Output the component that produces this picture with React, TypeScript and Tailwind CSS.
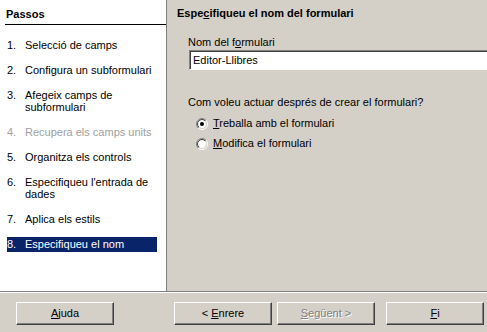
import React from "react";

const steps = [
  { n: "1.", label: "Selecció de camps" },
  { n: "2.", label: "Configura un subformulari" },
  { n: "3.", label: "Afegeix camps de subformulari" },
  { n: "4.", label: "Recupera els camps units", disabled: true },
  { n: "5.", label: "Organitza els controls" },
  { n: "6.", label: "Especifiqueu l'entrada de dades" },
  { n: "7.", label: "Aplica els estils" },
  { n: "8.", label: "Especifiqueu el nom", active: true },
];

const Radio = ({ checked }: { checked?: boolean }) => (
  <svg width="12" height="12" viewBox="0 0 12 12" className="shrink-0">
    <defs>
      <linearGradient id="outer" x1="0" y1="0" x2="1" y2="1">
        <stop offset="50%" stopColor="#808080" />
        <stop offset="50%" stopColor="#ffffff" />
      </linearGradient>
      <linearGradient id="inner" x1="0" y1="0" x2="1" y2="1">
        <stop offset="50%" stopColor="#404040" />
        <stop offset="50%" stopColor="#d4d0c8" />
      </linearGradient>
    </defs>
    <circle cx="6" cy="6" r="5.5" fill="none" stroke="url(#outer)" strokeWidth="1" />
    <circle cx="6" cy="6" r="4.5" fill="#ffffff" stroke="url(#inner)" strokeWidth="1" />
    {checked && <circle cx="6" cy="6" r="2" fill="#000000" />}
  </svg>
);

// Win2000 style raised push button
const Button = ({ children, disabled, className = "" }: { children: React.ReactNode; disabled?: boolean; className?: string }) => (
  <div
    className={`w-[98px] h-[23px] flex items-center justify-center border-t border-l border-t-white border-l-white border-b border-r border-b-[#404040] border-r-[#404040] shadow-[inset_-1px_-1px_0_#808080] ${
      disabled ? "text-[#808080] [text-shadow:1px_1px_0_#ffffff]" : "text-black"
    } ${className}`}
  >
    <span className="whitespace-pre">{children}</span>
  </div>
);

export default function App() {
  return (
    <div className="w-[487px] h-[332px] bg-[#d4d0c8] flex flex-col overflow-hidden text-[11px] leading-[13px] text-black font-['Liberation_Sans',Arial,sans-serif]">
      <div className="flex h-[291px]">
        {/* Steps panel */}
        <div className="w-[167px] bg-white border-r border-[#808080] flex flex-col">
          <div className="ml-[5px] pl-px pt-[8px] pb-[3px] border-b border-black font-bold">
            Passos
          </div>
          <div className="flex flex-col gap-[10px] mt-[13px] leading-[12px]">
            {steps.map((s) => (
              <div
                key={s.n}
                className={`ml-[7px] w-[150px] flex pt-px pb-[2px] ${
                  s.active ? "bg-[#0a246a] text-white" : s.disabled ? "text-[#a0a0a0]" : "text-black"
                }`}
              >
                <span className="w-[18px] shrink-0">{s.n}</span>
                <span>{s.label}</span>
              </div>
            ))}
          </div>
        </div>

        {/* Page content */}
        <div className="flex-1 min-w-0 overflow-hidden">
          <div className="pl-[10px] pt-[7px] font-bold">
            Espe<span className="underline">c</span>ifiqueu el nom del formulari
          </div>
          <div className="pl-[21px] mt-[16px]">Nom del f<span className="underline">o</span>rmulari</div>
          <div className="ml-[22px] mt-px w-[320px] h-[20px] bg-white border-t border-l border-[#808080] border-b border-r border-b-white border-r-white shadow-[inset_1px_1px_0_#404040] flex items-center pl-[3px]">
            Editor-Llibres
          </div>
          <div className="pl-[21px] mt-[26px]">Com voleu actuar després de crear el formulari?</div>
          <div className="pl-[29px] mt-[8px] flex items-center gap-[5px]">
            <Radio checked />
            <span>
              <span className="underline">T</span>reballa amb el formulari
            </span>
          </div>
          <div className="pl-[29px] mt-[7px] flex items-center gap-[5px]">
            <Radio />
            <span>
              <span className="underline">M</span>odifica el formulari
            </span>
          </div>
        </div>
      </div>

      {/* Separator */}
      <div className="h-px bg-[#808080]" />
      <div className="h-px bg-white" />

      {/* Button bar */}
      <div className="flex pt-[9px]">
        <Button className="ml-[16px]">
          <span className="underline">A</span>juda
        </Button>
        <Button className="ml-[60px]">
          {"< "}<span className="underline">E</span>nrere
        </Button>
        <Button className="ml-[5px]" disabled>
          <span className="underline">S</span>egüent{" >"}
        </Button>
        <Button className="ml-[11px]">
          <span className="underline">F</span>i
        </Button>
      </div>
    </div>
  );
}
